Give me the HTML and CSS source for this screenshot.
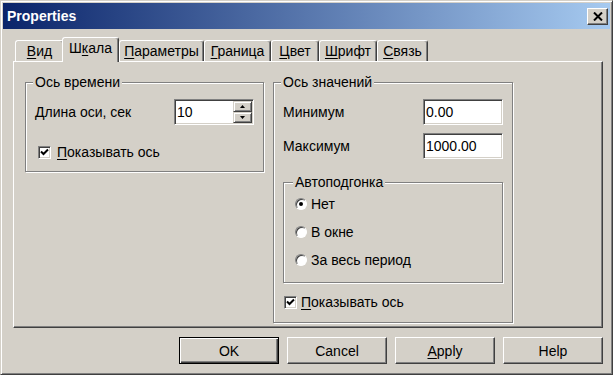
FILE: index.html
```html
<!DOCTYPE html>
<html lang="ru">
<head>
    <meta charset="UTF-8">
    <title>Properties</title>
    <link rel="stylesheet" href="styles.css">
</head>
<body>
    <div class="window">
        <div class="titlebar">
            <span class="title">Properties</span>
            <span class="close">
                <svg width="10" height="9" viewBox="0 0 10 9"><path d="M1 0.5 L9 8.5 M9 0.5 L1 8.5" stroke="#000" stroke-width="2" fill="none"/></svg>
            </span>
        </div>

        <div class="content">
            <!-- tab strip -->
            <div class="tabs">
                <span class="tab t-vid"><u>В</u>ид</span>
                <span class="tab t-scale active">Ш<u>к</u>ала</span>
                <span class="tab t-params"><u>П</u>араметры</span>
                <span class="tab t-border"><u>Г</u>раница</span>
                <span class="tab t-color"><u>Ц</u>вет</span>
                <span class="tab t-font"><u>Ш</u>рифт</span>
                <span class="tab t-link"><u>С</u>вязь</span>
            </div>

            <div class="panel">
                <!-- time axis -->
                <fieldset class="group group-time">
                    <legend>Ось времени</legend>
                    <div class="field-row">
                        <span>Длина оси, сек</span>
                        <span class="edit">
                            <span class="edit-text">10</span>
                            <span class="spin">
                                <span class="spin-btn"><svg width="5" height="3" viewBox="0 0 5 3"><path d="M2.5 0 L5 3 L0 3 Z" fill="#000"/></svg></span>
                                <span class="spin-btn"><svg width="5" height="3" viewBox="0 0 5 3"><path d="M0 0 L5 0 L2.5 3 Z" fill="#000"/></svg></span>
                            </span>
                        </span>
                    </div>
                    <div class="check check-time">
                        <span class="box"><svg width="9" height="9" viewBox="0 0 9 9"><path d="M1 3.5 L3.5 6 L8 1.5" stroke="#000" stroke-width="2" fill="none"/></svg></span>
                        <span><u>П</u>оказывать ось</span>
                    </div>
                </fieldset>

                <!-- value axis -->
                <fieldset class="group group-values">
                    <legend>Ось значений</legend>
                    <div class="field-row">
                        <span>Минимум</span>
                        <span class="edit"><span class="edit-text">0.00</span></span>
                    </div>
                    <div class="field-row row-max">
                        <span>Максимум</span>
                        <span class="edit"><span class="edit-text">1000.00</span></span>
                    </div>

                    <fieldset class="group group-auto">
                        <legend>Автоподгонка</legend>
                        <div class="radio-row"><span class="radio checked"></span><span>Нет</span></div>
                        <div class="radio-row"><span class="radio"></span><span>В окне</span></div>
                        <div class="radio-row"><span class="radio"></span><span>За весь период</span></div>
                    </fieldset>

                    <div class="check check-values">
                        <span class="box"><svg width="9" height="9" viewBox="0 0 9 9"><path d="M1 3.5 L3.5 6 L8 1.5" stroke="#000" stroke-width="2" fill="none"/></svg></span>
                        <span><u>П</u>оказывать ось</span>
                    </div>
                </fieldset>
            </div>

            <div class="buttons">
                <span class="btn default">OK</span>
                <span class="btn">Cancel</span>
                <span class="btn"><u>A</u>pply</span>
                <span class="btn">Help</span>
            </div>
        </div>
    </div>
</body>
</html>
```

FILE: styles.css
```css
body {
    margin: 0;
    background-color: #d4d0c8; /* classic dialog grey */
    font-family: "Liberation Sans", Arial, sans-serif;
    font-size: 14px;
    color: #000;
}

u {
    text-decoration-thickness: 1px;
    text-underline-offset: 2px;
}

.window {
    width: 613px;
    height: 375px;
    box-sizing: border-box;
    border: 1px solid;
    border-color: #d4d0c8 #404040 #404040 #d4d0c8;
    box-shadow: inset 1px 1px #fff, inset -1px -1px #808080;
    padding: 2px;
}

/* Title bar */
.titlebar {
    height: 26px;
    display: flex;
    align-items: center;
    justify-content: space-between;
    padding: 0 2px 0 4px;
    background: linear-gradient(to right, #0a246a, #a6caf0);
    color: #fff;
    font-weight: bold;
    font-size: 14px;
}

.close {
    width: 21px;
    height: 17px;
    box-sizing: border-box;
    background-color: #d4d0c8;
    border: 1px solid;
    border-color: #fff #404040 #404040 #fff;
    box-shadow: inset -1px -1px #808080;
    display: flex;
    align-items: center;
    justify-content: center;
    margin-top: 1px;
}

.content {
    padding: 8px 7px 0 10px;
}

/* Tabs */
.tabs {
    display: flex;
    align-items: flex-end;
    height: 24px;
    padding-left: 2px;
}

.tab {
    height: 21px;
    box-sizing: border-box;
    border: 1px solid;
    border-bottom: none;
    border-color: #fff #404040 transparent #fff;
    border-radius: 3px 3px 0 0;
    box-shadow: inset -1px 0 #808080;
    text-align: center;
    line-height: 21px;
    background-color: #d4d0c8;
}

.tab.active {
    position: relative;
    z-index: 2;
    height: 25px;
    margin-left: -2px;
    margin-bottom: -1px;
    line-height: 20px;
}

.t-vid { width: 49px; }
.t-scale { width: 57px; }
.t-params { width: 85px; }
.t-border { width: 67px; }
.t-color { width: 48px; }
.t-font { width: 58px; }
.t-link { width: 51px; }

.panel {
    width: 590px;
    height: 267px;
    box-sizing: border-box;
    border: 1px solid;
    border-color: #fff #404040 #404040 #fff;
    box-shadow: inset -1px -1px #808080;
    padding: 12px 0 0 11px;
    display: flex;
    align-items: flex-start;
    gap: 9px;
}

/* Group boxes (etched) */
.group {
    margin: 0;
    padding: 0 9px;
    min-width: 0;
    box-sizing: border-box;
    border: 1px solid #808080;
    box-shadow: inset 1px 1px #fff, 1px 1px #fff;
}

.group legend {
    padding: 0 2px;
    margin-left: -2px;
    line-height: 16px;
    background-color: #d4d0c8;
}

.group-time {
    width: 239px;
    height: 98px;
}

.group-values {
    width: 240px;
    height: 249px;
}

.group-auto {
    width: 220px;
    height: 109px;
    margin-top: 15px;
    padding: 0 11px;
}

.field-row {
    display: flex;
    align-items: center;
    justify-content: space-between;
    height: 26px;
    margin-top: 9px;
}

.row-max {
    margin-top: 8px;
}

/* Edit fields */
.edit {
    width: 80px;
    height: 26px;
    box-sizing: border-box;
    background-color: #fff;
    border: 1px solid;
    border-color: #808080 #fff #fff #808080;
    box-shadow: inset 1px 1px #404040, inset -1px -1px #d4d0c8;
    padding-left: 2px;
    display: flex;
    align-items: center;
}

.edit-text {
    flex: 1;
}

.spin {
    display: flex;
    flex-direction: column;
    width: 19px;
    height: 22px;
    margin-right: 1px;
}

.spin-btn {
    flex: 1;
    box-sizing: border-box;
    background-color: #d4d0c8;
    border: 1px solid;
    border-color: #d4d0c8 #404040 #404040 #d4d0c8;
    box-shadow: inset 1px 1px #fff, inset -1px -1px #808080;
    display: flex;
    align-items: center;
    justify-content: center;
}

/* Check boxes */
.check {
    display: flex;
    align-items: center;
    height: 20px;
}

.check-time {
    margin-top: 17px;
    margin-left: 3px;
    gap: 6px;
}

.check-values {
    margin-top: 9px;
    margin-left: 1px;
    gap: 4px;
}

.box {
    width: 13px;
    height: 13px;
    box-sizing: border-box;
    background-color: #fff;
    border: 1px solid;
    border-color: #808080 #fff #fff #808080;
    box-shadow: inset 1px 1px #404040, inset -1px -1px #d4d0c8;
    display: flex;
    align-items: center;
    justify-content: center;
}

/* Radio buttons */
.radio-row {
    display: flex;
    align-items: center;
    gap: 4px;
    height: 28px;
}

.radio {
    width: 12px;
    height: 12px;
    box-sizing: border-box;
    border-radius: 50%;
    background-color: #fff;
    border: 1px solid;
    border-color: #808080 #fff #fff #808080;
    box-shadow: inset 1px 1px #404040;
    display: flex;
    align-items: center;
    justify-content: center;
}

.radio.checked::after {
    content: "";
    width: 4px;
    height: 4px;
    border-radius: 50%;
    background-color: #000;
}

/* Dialog buttons */
.buttons {
    width: 590px;
    display: flex;
    justify-content: flex-end;
    gap: 8px;
    margin-top: 9px;
}

.btn {
    width: 100px;
    height: 27px;
    box-sizing: border-box;
    background-color: #d4d0c8;
    border: 1px solid;
    border-color: #fff #404040 #404040 #fff;
    box-shadow: inset -1px -1px #808080;
    display: flex;
    align-items: center;
    justify-content: center;
}

.btn.default {
    border-color: #000;
    box-shadow: inset 1px 1px #fff, inset -1px -1px #404040, inset -2px -2px #808080;
}
```
